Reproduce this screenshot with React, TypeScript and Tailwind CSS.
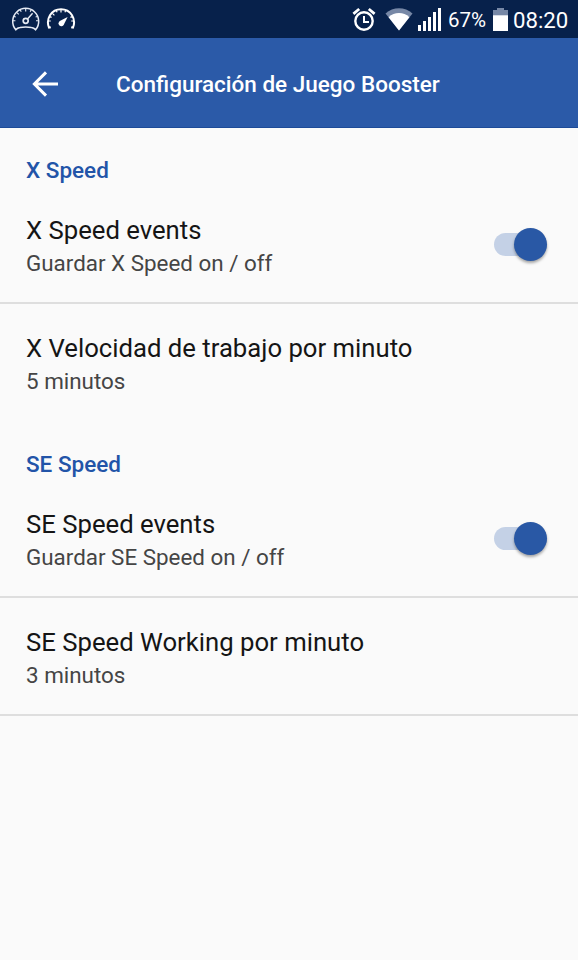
import { useState } from "react";

type SettingItem = {
  title: string;
  summary: string;
  toggle?: boolean;
  divider?: boolean;
};

type SettingSection = {
  heading: string;
  items: SettingItem[];
};

const sections: SettingSection[] = [
  {
    heading: "X Speed",
    items: [
      { title: "X Speed events", summary: "Guardar X Speed on / off", toggle: true, divider: true },
      { title: "X Velocidad de trabajo por minuto", summary: "5 minutos" },
    ],
  },
  {
    heading: "SE Speed",
    items: [
      { title: "SE Speed events", summary: "Guardar SE Speed on / off", toggle: true, divider: true },
      { title: "SE Speed Working por minuto", summary: "3 minutos", divider: true },
    ],
  },
];

function GaugeOutlineIcon() {
  return (
    <svg width="30" height="26" viewBox="0 0 30 26" fill="none" stroke="#e6ebf4" strokeWidth="1.1" aria-hidden="true">
      <path d="M4.8 22.8A13 13 0 1 1 24.6 22.8C23.4 21.2 22.2 20.6 20.4 20.4C17 19.9 12.4 19.9 9 20.4C7.2 20.6 6 21.2 4.8 22.8Z" strokeWidth="1.5" />
      <circle cx="14.7" cy="13.8" r="2.5" strokeWidth="1.7" />
      <path d="M16.5 12L21.6 6.2" strokeWidth="1.4" />
      <path d="M14.7 1.4v3M6 5.6l1.7 1.7M1.8 13.8h2.6M27.6 13.8H25M9.3 2.8l.9 1.9M20.1 2.8l-.9 1.9M3 9.4l1.8.7M26.4 9.4l-1.8.7" />
    </svg>
  );
}

function GaugeIcon() {
  return (
    <svg width="30" height="26" viewBox="0 0 30 26" fill="none" stroke="#fff" aria-hidden="true">
      <path d="M4.8 20.2L3 20.6C-.4 12 5 2.2 15 2.2S30.4 12 27 20.6l-1.8-.4" strokeWidth="2" />
      <path d="M15 2.2v3.4M6.4 6.4l2 2M2 14h2.8M28 14h-2.8M10.2 3.2l.9 2M19.8 3.2l-.9 2M3.6 9.6l2 .8M26.4 9.6l-2 .8" strokeWidth="1.2" />
      <path d="M21.6 10L17.8 17.8A2.8 2.8 0 1 1 13.8 14.1Z" fill="#fff" stroke="none" />
    </svg>
  );
}

function AlarmIcon() {
  return (
    <svg width="24" height="25" viewBox="0 0 24 25" fill="none" stroke="#fff" aria-hidden="true">
      <circle cx="12" cy="14" r="8.7" strokeWidth="2.4" />
      <path d="M12 9v6h5" strokeWidth="2" />
      <path d="M1.4 6.8L7.2 2M22.6 6.8L16.8 2" strokeWidth="2.8" />
    </svg>
  );
}

function WifiIcon() {
  return (
    <svg width="28" height="23" viewBox="0 0 28 23" aria-hidden="true">
      <path d="M.5 5.4C8-1.6 20-1.6 27.5 5.4L14 22.6Z" fill="#7788a6" />
      <path d="M3.6 9.3C9.4 3.7 18.6 3.7 24.4 9.3L14 22.6Z" fill="#fff" />
    </svg>
  );
}

function SignalIcon() {
  return (
    <svg width="23" height="23" viewBox="0 0 23 23" fill="#fff" aria-hidden="true">
      <path d="M0 17h3v6H0zM5 13h3v10H5zM10 9h3v14h-3zM15 4h3v19h-3zM20 0h3v23h-3z" />
    </svg>
  );
}

function BatteryIcon() {
  return (
    <svg width="15" height="23" viewBox="0 0 15 23" aria-hidden="true">
      <path d="M4 0h7v2h4v6H0V2h4z" fill="#7788a6" />
      <path d="M0 7.3h15V23H0z" fill="#fff" />
    </svg>
  );
}

function StatusBar() {
  return (
    <div className="flex h-[38px] items-center justify-between bg-[#07214b] pr-[9px] pl-[11px] text-white">
      <div className="flex items-center gap-[5px] pt-0.5">
        <GaugeOutlineIcon />
        <GaugeIcon />
      </div>
      <div className="flex items-center">
        <AlarmIcon />
        <span className="ml-[9px]"><WifiIcon /></span>
        <span className="ml-[5px]"><SignalIcon /></span>
        <span className="ml-[7px] w-[39px] pt-0.5 text-[20.5px] leading-6 whitespace-nowrap">67%</span>
        <span className="ml-[6px]"><BatteryIcon /></span>
        <span className="ml-[5px] w-[56px] pt-0.5 text-[22.2px] leading-6 whitespace-nowrap">08:20</span>
      </div>
    </div>
  );
}

function AppBar() {
  return (
    <header className="flex h-[90px] items-center border-b border-[#1d4b98] bg-[#2b5aa8] pt-[3px] pl-8 text-white">
      <button type="button" aria-label="Atrás" className="mr-[57px] pb-px">
        <svg width="27" height="26" viewBox="0 0 27 26" fill="none" stroke="#fff" strokeWidth="3" aria-hidden="true">
          <path d="M14 1.4L2.4 13L14 24.6M2.4 13H26" />
        </svg>
      </button>
      <h1 className="pt-0.5 text-[22.5px] font-medium whitespace-nowrap">Configuración de Juego Booster</h1>
    </header>
  );
}

function Toggle({ label }: { label: string }) {
  const [on, setOn] = useState(true);

  return (
    <button
      type="button"
      role="switch"
      aria-checked={on}
      aria-label={label}
      onClick={() => setOn(!on)}
      className={
        on
          ? "flex h-[23px] w-[53px] items-center justify-end rounded-full bg-[#c4d1e6]"
          : "flex h-[23px] w-[53px] items-center justify-start rounded-full bg-[#b5b5b5]"
      }
    >
      <span
        className={
          on
            ? "size-[33px] shrink-0 rounded-full bg-[#2958a5] shadow-[0_2px_3px_rgba(0,0,0,0.35)]"
            : "size-[33px] shrink-0 rounded-full bg-[#f1f1f1] shadow-[0_2px_3px_rgba(0,0,0,0.35)]"
        }
      />
    </button>
  );
}

function SettingRow({ item }: { item: SettingItem }) {
  return (
    <div className={item.divider ? "border-b-2 border-[#dedede]" : "border-b-2 border-transparent"}>
      <div className="flex h-[116px] items-center justify-between pr-[31px] pl-[26px]">
        <div className="pt-[5px]">
          <p className="text-[25.7px] leading-8 text-[#151515]">{item.title}</p>
          <p className="pt-px text-[22.4px] leading-8 text-[#454545]">{item.summary}</p>
        </div>
        {item.toggle && <Toggle label={item.title} />}
      </div>
    </div>
  );
}

export default function App() {
  return (
    <div className="min-h-screen bg-[#fafafa] font-['Roboto',sans-serif]">
      <StatusBar />
      <AppBar />
      <main>
        {sections.map((section) => (
          <section key={section.heading}>
            <h2 className="h-[58px] pt-[26px] pl-[26px] text-[22.5px] leading-8 font-medium text-[#2254a8]">
              {section.heading}
            </h2>
            {section.items.map((item) => (
              <SettingRow key={item.title} item={item} />
            ))}
          </section>
        ))}
      </main>
    </div>
  );
}
